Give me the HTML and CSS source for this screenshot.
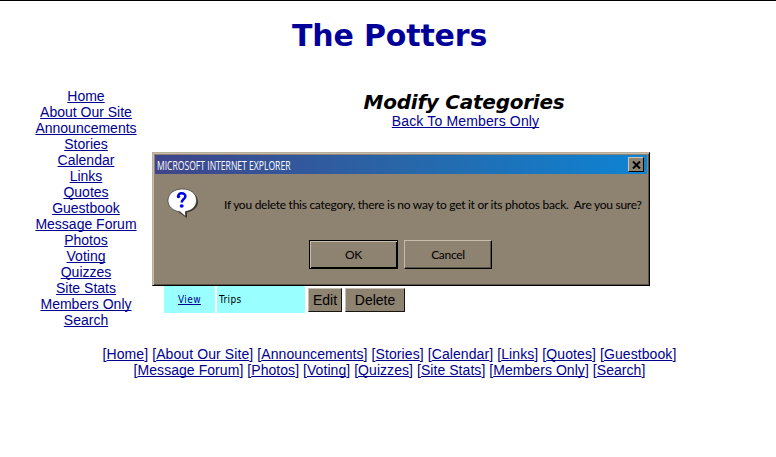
FILE: index.html
```
<!DOCTYPE html>
<html lang="en">
<head>
<meta charset="utf-8">
<title>The Potters</title>
<link rel="stylesheet" href="styles.css">
</head>
<body>
<h1 class="site-title"><span>The Potters</span></h1>
<div class="columns">
  <nav class="side-nav">
    <a href="#">Home</a>
    <a href="#">About Our Site</a>
    <a href="#">Announcements</a>
    <a href="#">Stories</a>
    <a href="#">Calendar</a>
    <a href="#">Links</a>
    <a href="#">Quotes</a>
    <a href="#">Guestbook</a>
    <a href="#">Message Forum</a>
    <a href="#">Photos</a>
    <a href="#">Voting</a>
    <a href="#">Quizzes</a>
    <a href="#">Site Stats</a>
    <a href="#">Members Only</a>
    <a href="#">Search</a>
  </nav>
  <main class="content">
    <h2 class="page-title">Modify Categories</h2>
    <a class="back" href="#">Back To Members Only</a>
    <div class="category-row">
      <div class="cell view"><a href="#">View</a></div>
      <div class="cell name">Trips</div>
      <div class="cell actions"><button class="edit">Edit</button><button class="delete">Delete</button></div>
    </div>
  </main>
</div>
<footer class="footer-nav">
  <div class="line first">[<a href="#">Home</a>] [<a href="#">About Our Site</a>] [<a href="#">Announcements</a>] [<a href="#">Stories</a>] [<a href="#">Calendar</a>] [<a href="#">Links</a>] [<a href="#">Quotes</a>] [<a href="#">Guestbook</a>]</div>
  <div class="line second">[<a href="#">Message Forum</a>] [<a href="#">Photos</a>] [<a href="#">Voting</a>] [<a href="#">Quizzes</a>] [<a href="#">Site Stats</a>] [<a href="#">Members Only</a>] [<a href="#">Search</a>]</div>
</footer>
<div class="dialog" role="dialog">
  <div class="titlebar">
    <span class="caption">MICROSOFT INTERNET EXPLORER</span>
    <button class="close" aria-label="Close"><svg width="9" height="8" viewBox="0 0 9 8"><path d="M1 .5 8 7.5M8 .5 1 7.5" stroke="#000" stroke-width="2"/></svg></button>
  </div>
  <div class="message">
    <svg class="bubble" width="32" height="32" viewBox="0 0 32 32">
      <path d="M17 3C25 3 31 7 31 14C31 19 27 23 20 24.500L20 30L12 24.500" fill="#3c362e"/>
      <path d="M15.500 1C23.500 1 29.500 5.500 29.500 12.500C29.500 18.500 25 22.500 18.500 23.500L18.500 28.500L13 23.800C6 23 1 18.500 1 12.500C1 5.500 7.500 1 15.500 1Z" fill="#fff" stroke="#222" stroke-width=".6"/>
      <path d="M11.300 8.800C10.500 4.200 18.500 4.100 18.400 8.300C18.300 11.300 14.700 11.300 14.600 14.500" fill="none" stroke="#0000e8" stroke-width="2.500"/>
      <circle cx="11.500" cy="8.600" r="1.700" fill="#0000e8"/>
      <ellipse cx="14.700" cy="18" rx="2" ry="1.700" fill="#0000e8"/>
    </svg>
    <p>If you delete this category, there is no way to get it or its photos back.&nbsp; Are you sure?</p>
  </div>
  <div class="buttons"><button class="ok">OK</button><button class="cancel">Cancel</button></div>
</div>
</body>
</html>
```
FILE: styles.css
```
* { box-sizing: border-box; }
body {
  margin: 0;
  width: 776px;
  height: 457px;
  overflow: hidden;
  position: relative;
  background: #fff;
  border-top: 1px solid #000;
  font: 14px/16px "Liberation Sans", Arial, sans-serif;
  color: #000080;
}
a { color: #000090; text-decoration: underline; text-decoration-skip-ink: none; }
button { font: inherit; color: #000; background: #8e8270; padding: 0; margin: 0; border-radius: 0; }
.site-title {
  margin: 0;
  padding: 17px 0 0 3px;
  height: 87px;
  text-align: center;
  font: bold 30px/35px "DejaVu Sans", Verdana, sans-serif;
  letter-spacing: -.15px;
  color: #000099;
}
.columns { display: flex; height: 258px; }
.side-nav {
  width: 152px;
  padding: 0 0 0 20px;
  display: flex;
  flex-direction: column;
  align-items: center;
}
.content { flex: 1; display: flex; flex-direction: column; align-items: center; }
.page-title {
  margin: 2px 0 0;
  font: italic bold 20px/24px "DejaVu Sans", Verdana, sans-serif;
  letter-spacing: -.25px;
  color: #000;
}
.back { margin-top: -1px; letter-spacing: .15px; padding-left: 3px; text-indent: 0; }
.category-row { display: flex; gap: 2px; align-self: flex-start; margin: 157px 0 0 12px; height: 27px; font-size: 11px; }
.cell { background: #99ffff; display: flex; align-items: center; color: #000; }
.view { width: 51px; justify-content: center; }
.name { width: 88px; padding-left: 2px; }
.view, .name { font-family: "DejaVu Sans Condensed", "DejaVu Sans", sans-serif; font-size: 10px; letter-spacing: .4px; }
.actions { gap: 3px; padding: 2px 0 0 1px; align-items: flex-start; background: #fff; }
.actions button { height: 24px; font-size: 14px; border: 1px solid; border-color: #c8bcb0 #181410 #181410 #c8bcb0; }
.edit { width: 34px; }
.delete { width: 60px; }
.footer-nav { padding-left: 3px; }
.line { white-space: nowrap; text-align: center; letter-spacing: .09px; }
.second { letter-spacing: .055px; }
.dialog {
  position: absolute;
  left: 152px;
  top: 151px;
  width: 498px;
  height: 134px;
  padding: 2px;
  background: #8e8270;
  border: 1px solid;
  border-color: #b8ac9c #000 #000 #b8ac9c;
  box-shadow: inset 1px 1px #c8bcac, inset -1px -1px #5a5146;
  color: #000;
  font: 12px/16px Lato, sans-serif;
}
.titlebar {
  height: 19px;
  display: flex;
  align-items: center;
  justify-content: space-between;
  padding: 0 3px 0 2px;
  background: linear-gradient(90deg, #40448a, #2866a8 50%, #0d84d4);
}
.caption { color: #fff; font: 13px/18px "Open Sans", sans-serif; white-space: nowrap; transform: scaleX(.66); transform-origin: 0 50%; }
.close { width: 16px; height: 15px; display: flex; align-items: center; justify-content: center; border: 1px solid; border-color: #d0c4b4 #000 #000 #d0c4b4; }
.message { display: flex; height: 66px; padding: 14px 0 0 12px; }
.bubble { flex: none; }
.message p { margin: 9px 0 0 25px; white-space: nowrap; letter-spacing: -.27px; }
.buttons { display: flex; gap: 6px; padding-left: 154px; }
.buttons button { width: 89px; height: 29px; letter-spacing: -.3px; }
.buttons .cancel { width: 88px; }
.ok { border: 1px solid #000; box-shadow: inset 1px 1px #c8bcac, inset -1px -1px #000; }
.cancel { border: 1px solid; border-color: #c8bcac #000 #000 #c8bcac; box-shadow: inset -1px -1px #5a5146; }
```
